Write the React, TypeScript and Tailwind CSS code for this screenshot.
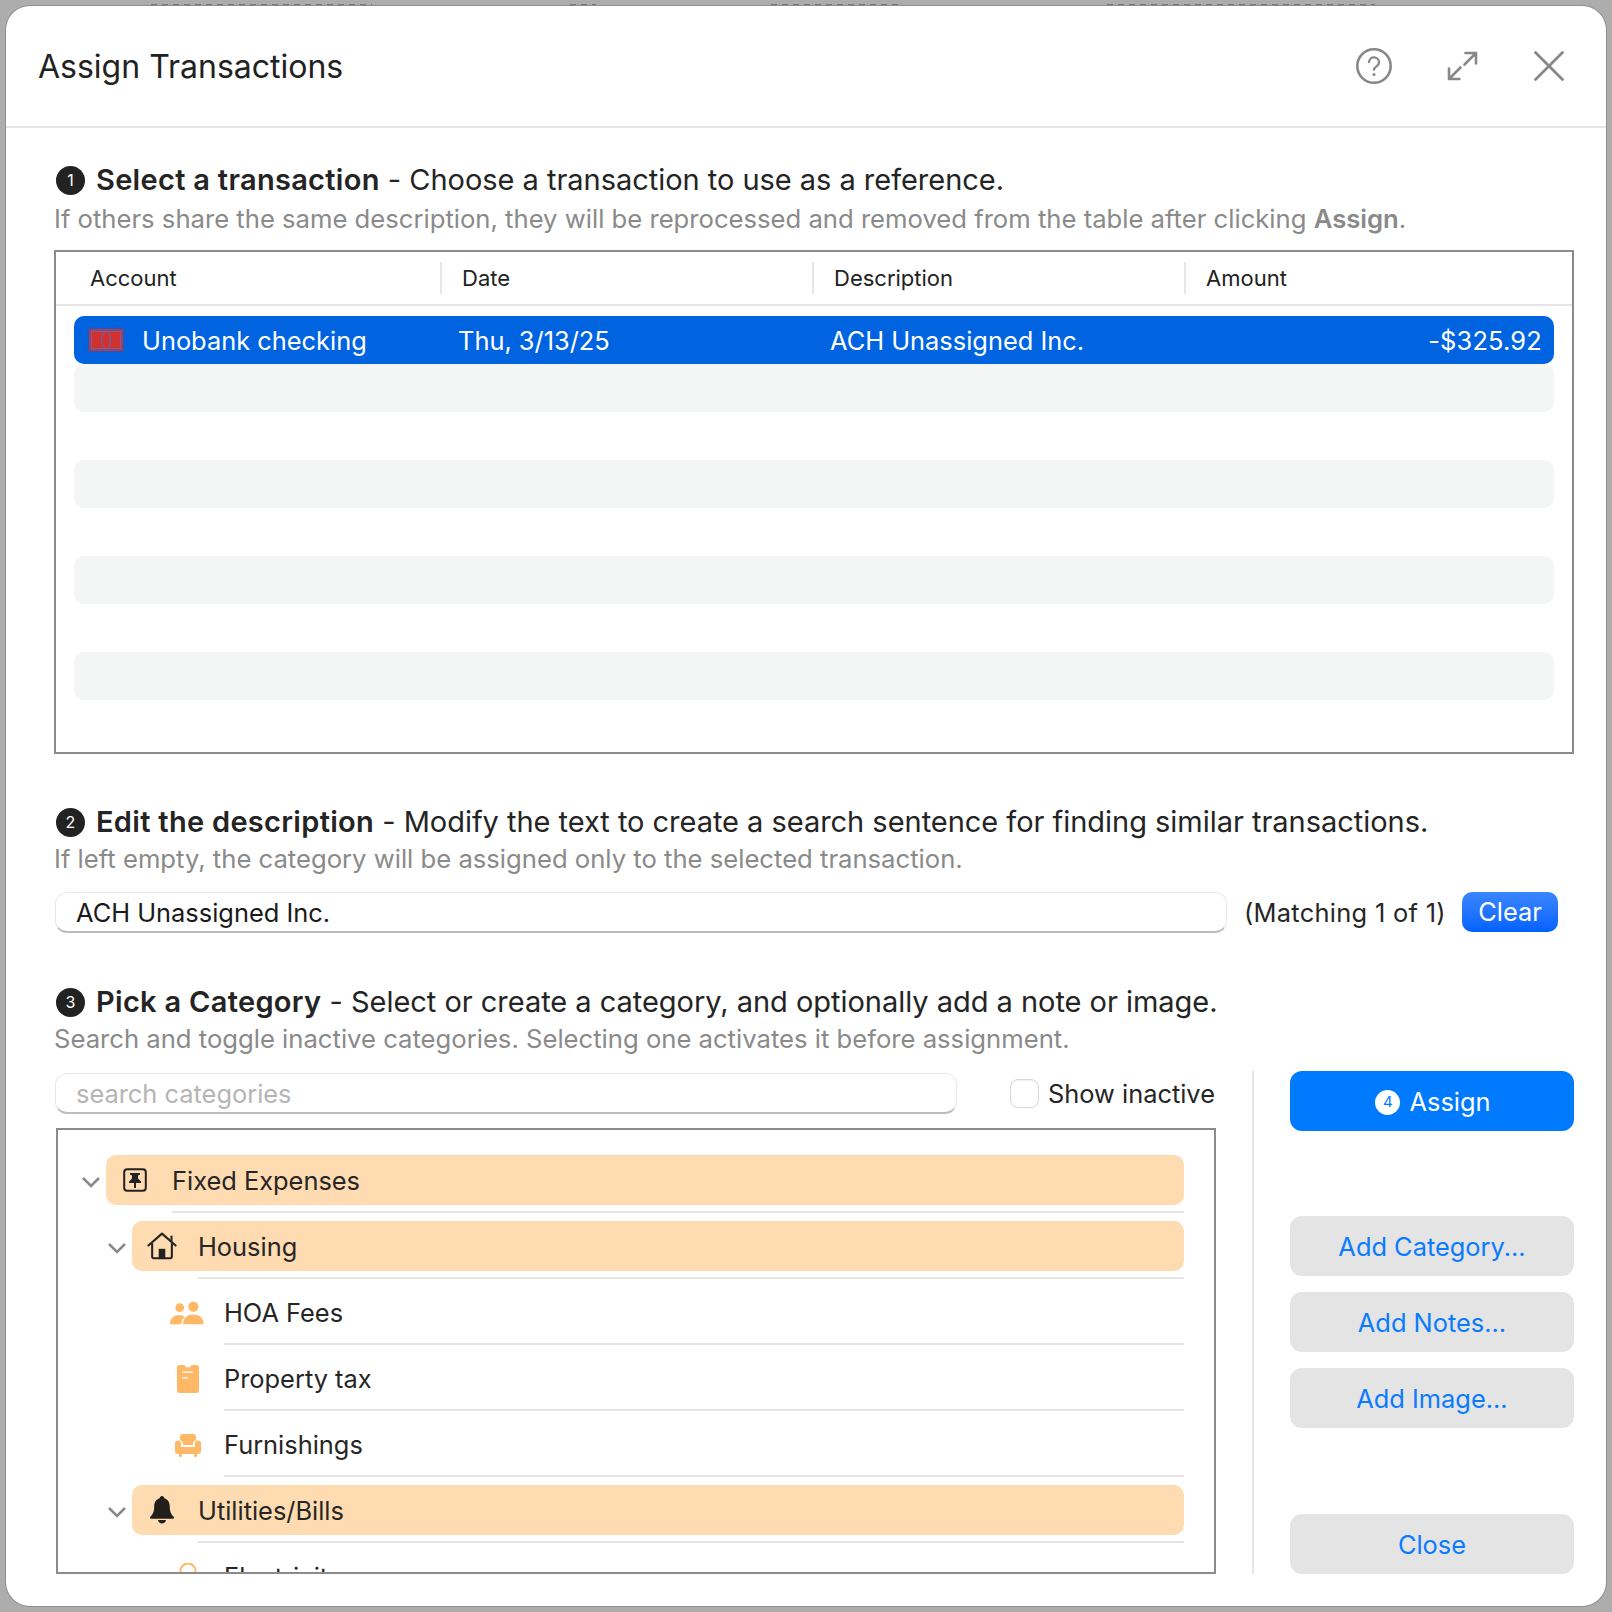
const sans = "font-['Inter','Noto_Sans',sans-serif]";

function Badge({ n }: { n: number }) {
  return (
    <span className="ml-[2px] mr-[11px] inline-flex h-[29px] w-[29px] shrink-0 items-center justify-center rounded-full bg-[#222222] text-[16px] font-normal tracking-normal text-white">
      {n}
    </span>
  );
}

function Heading({ n, bold, rest, className }: { n: number; bold: string; rest: string; className?: string }) {
  return (
    <div className={"flex items-center text-[29px] leading-[36px] text-[#242424] " + (className ?? "")}>
      <Badge n={n} />
      <span className="whitespace-pre tracking-[-0.03px]">
        <span className="font-semibold tracking-[0.3px]">{bold}</span>
        {rest}
      </span>
    </div>
  );
}

function Chevron() {
  return (
    <svg width="20" height="12" viewBox="0 0 20 12" fill="none" className="mt-[4px] shrink-0">
      <path d="M2 2 10 10 18 2" stroke="#8a8a8a" strokeWidth="2.600" />
    </svg>
  );
}

function PinIcon() {
  return (
    <svg width="26" height="26" viewBox="0 0 26 26" fill="none">
      <rect x="2.200" y="2.200" width="21.600" height="21.600" rx="3" stroke="#222" strokeWidth="2" />
      <path d="M8 6h10v1.600l-2 1v3l3 2.900v1.500H7v-1.500l3-2.900v-3l-2-1z" fill="#222" />
      <rect x="12" y="15" width="2" height="6" fill="#222" />
    </svg>
  );
}

function HouseIcon() {
  return (
    <svg width="32" height="30" viewBox="0 0 32 30" fill="none">
      <path d="M1.500 14.500 16 1.800l14.500 12.700" stroke="#222" strokeWidth="2.200" strokeLinecap="round" strokeLinejoin="round" />
      <path d="M5.500 12v14.500a1.500 1.500 0 0 0 1.500 1.500h18a1.500 1.500 0 0 0 1.500-1.500V12" stroke="#222" strokeWidth="2.200" />
      <rect x="12.500" y="18" width="7" height="10" fill="#222" />
      <rect x="25" y="4" width="2.200" height="6" fill="#222" />
    </svg>
  );
}

function PeopleIcon() {
  return (
    <svg width="36" height="24" viewBox="0 0 36 24" fill="#ffb866">
      <circle cx="10" cy="6.500" r="4.500" />
      <circle cx="24" cy="5.500" r="5.300" />
      <path d="M1 23.500c-.6 0-1-.4-1-1 0-4.500 4-8.500 9-8.500 2.500 0 4.500.7 6 2-2 1.800-3.200 4-3.400 7.500z" />
      <path d="M14.500 23.500c-.6 0-1-.4-1-1C13.500 17 18 13.500 24 13.500s10.500 3.500 10.500 9c0 .6-.4 1-1 1z" />
    </svg>
  );
}

function NoteIcon() {
  return (
    <svg width="22" height="28" viewBox="0 0 22 28" fill="#ffb866">
      <path d="M2.500 0H7.500c.3 1.500 1.700 2.500 3.500 2.500s3.200-1 3.500-2.500h5A2.500 2.500 0 0 1 22 2.500V25.500A2.500 2.500 0 0 1 19.500 28h-17A2.500 2.500 0 0 1 0 25.500V2.500A2.500 2.500 0 0 1 2.500 0z" />
      <rect x="5.500" y="6.500" width="10.500" height="1.500" fill="#fff" opacity="0.9" />
      <rect x="5.500" y="12" width="5.500" height="1.500" fill="#fff" opacity="0.9" />
    </svg>
  );
}

function SofaIcon() {
  return (
    <svg width="26" height="23" viewBox="0 0 26 23" fill="#ffb866">
      <path d="M5 3a3 3 0 0 1 3-3h10a3 3 0 0 1 3 3v3.500a3.500 3.500 0 0 0-3 3.500v1H8v-1a3.500 3.500 0 0 0-3-3.500z" />
      <path d="M0 9.500A2.500 2.500 0 0 1 6 9.500V13h14V9.500a2.500 2.500 0 0 1 6 0V17a3 3 0 0 1-3 3H3a3 3 0 0 1-3-3z" />
      <rect x="4" y="20" width="3" height="3" rx="1" />
      <rect x="19" y="20" width="3" height="3" rx="1" />
    </svg>
  );
}

function BellIcon() {
  return (
    <svg width="26" height="28" viewBox="0 0 26 28" fill="#221f1a">
      <path d="M13 0c1.400 0 2.200 1 2.300 2.200C19 3.300 20.800 6.500 20.800 10.500c0 5 1.200 7.500 3.800 10.200.7.700.4 2-.8 2H2.200c-1.200 0-1.500-1.300-.8-2C4 18 5.200 15.500 5.200 10.500 5.200 6.500 7 3.300 10.700 2.200 10.800 1 11.600 0 13 0z" />
      <path d="M9 24h8c-.3 2-2 3.500-4 3.500S9.300 26 9 24z" />
    </svg>
  );
}

function Pill({ label, icon, indent }: { label: string; icon: React.ReactNode; indent: "a" | "b" }) {
  return (
    <div className={"flex h-[66px] flex-col " + (indent === "a" ? "pl-[22px]" : "pl-[48px]")}>
      <div className="flex h-[50px] items-center">
        <span className="flex w-[26px] shrink-0 justify-start pl-[1px]"><Chevron /></span>
        <div className="flex h-[50px] flex-1 items-center rounded-[10px] bg-[#fedbb0]">
          <span className={"flex shrink-0 items-center justify-center " + (indent === "a" ? "ml-[16px] w-[26px]" : "ml-[15px] w-[30px]")}>{icon}</span>
          <span className={"mt-[2px] " + (indent === "a" ? "ml-[24px]" : "ml-[21px]")}>{label}</span>
        </div>
      </div>
      <div className="ml-[92px] mt-[6px] h-[2px] bg-[#e5e5e5]" />
    </div>
  );
}

function Leaf({ label, icon }: { label: string; icon: React.ReactNode }) {
  return (
    <div className="flex h-[66px] flex-col pl-[111px]">
      <div className="flex h-[52px] shrink-0 items-center">
        <span className="flex w-[36px] shrink-0 items-center justify-center pl-[1px]">{icon}</span>
        <span className="ml-[19px]">{label}</span>
      </div>
      <div className="ml-[55px] mt-[4px] h-[2px] shrink-0 bg-[#e5e5e5]" />
    </div>
  );
}

function SideButton({ label, className }: { label: string; className?: string }) {
  return (
    <button className={"flex h-[60px] w-full shrink-0 items-center justify-center rounded-[12px] bg-[#e4e4e4] pt-[2px] text-[#0a7bff] " + (className ?? "")}>
      {label}
    </button>
  );
}

const rows = [0, 1, 2, 3, 4, 5, 6, 7];

const fragment = "absolute top-[4px] h-[2px] bg-[repeating-linear-gradient(90deg,#757575_0_6px,transparent_6px_11px)]";

export default function App() {
  return (
    <div className={"relative flex h-[1612px] w-[1612px] flex-col overflow-hidden bg-[#adadad] p-[6px] text-[25.4px] text-[#262626] " + sans}>
      <div className={fragment + " left-[151px] w-[221px]"} />
      <div className={fragment + " left-[570px] w-[26px]"} />
      <div className={fragment + " left-[771px] w-[131px]"} />
      <div className={fragment + " left-[1107px] w-[268px]"} />
      <div className="relative flex h-full flex-col rounded-[24px] bg-white shadow-[0_0_0_1px_#8e8e8e]">
        <header className="flex h-[122px] shrink-0 items-center justify-between border-b-2 border-[#e5e5e5] pl-[32px] pr-[42px]">
          <h1 className="mt-[1px] text-[32px] font-normal text-[#222222]">Assign Transactions</h1>
          <div className="flex items-center text-[#888888]">
            <svg width="38" height="38" viewBox="0 0 38 38" fill="none" stroke="currentColor" strokeWidth="2.600" strokeLinecap="round">
              <circle cx="19" cy="19" r="16.700" />
              <path d="M14 15a5 5 0 0 1 10 .8c0 3.400-5 3.800-5 7" strokeWidth="2.300" />
              <circle cx="19" cy="27.500" r="1.500" fill="currentColor" stroke="none" />
            </svg>
            <svg className="ml-[53px]" width="32" height="32" viewBox="0 0 32 32" fill="none" stroke="currentColor" strokeWidth="2.600" strokeLinecap="round" strokeLinejoin="round">
              <path d="M19.500 3H30V13.500M30 3 18.500 14.500M3 18.500V29H13.500M3 29 14.500 17.500" />
            </svg>
            <svg className="ml-[56px]" width="30" height="30" viewBox="0 0 30 30" fill="none" stroke="currentColor" strokeWidth="2.800" strokeLinecap="round">
              <path d="M1.500 1.500 28.500 28.500M28.500 1.500 1.500 28.500" />
            </svg>
          </div>
        </header>
        <main className="flex min-h-0 flex-1 flex-col pl-[48px] pr-[32px]">
          <Heading n={1} bold="Select a transaction" rest=" - Choose a transaction to use as a reference." className="mt-[34px]" />
          <p className="mt-[3px] text-[25.65px] leading-[36px] text-[#8a8a8a]">
            If others share the same description, they will be reprocessed and removed from the table after clicking <b className="font-semibold">Assign</b>.
          </p>
          <section className="mt-[13px] h-[504px] shrink-0 border-2 border-[#8a8a8f] bg-white">
            <div className="flex h-[54px] items-center border-b-2 border-[#e5e5e5] text-[22px] text-[#222222]">
              {["Account", "Date", "Description", "Amount"].map((h) => (
                <div key={h} className="flex h-[32px] w-[372px] items-center border-l-2 border-[#e5e5e5] pl-[20px] first:w-[384px] first:border-l-0 first:pl-[34px] last:flex-1">
                  {h}
                </div>
              ))}
            </div>
            <div className="flex flex-col pl-[18px] pr-[18px] pt-[10px]">
              {rows.map((i) =>
                i === 0 ? (
                  <div key={i} className="flex h-[48px] items-center rounded-[10px] bg-[#0064e1] text-white">
                    <span className="ml-[15px] flex h-[22px] w-[34px] shrink-0 items-center justify-center border-2 border-[#d0312d] bg-[#d0312d] outline outline-1 -outline-offset-3 outline-[#4f6bd0]">
                      <span className="h-[18px] w-[10px] rounded-[50%] border-[1.500px] border-[#4f6bd0]" />
                    </span>
                    <span className="ml-[19px] mt-[2px] w-[316px] shrink-0">Unobank checking</span>
                    <span className="mt-[2px] w-[372px] shrink-0">Thu, 3/13/25</span>
                    <span className="mt-[2px] flex-1">ACH Unassigned Inc.</span>
                    <span className="mr-[12px] mt-[2px] tracking-[0.2px]">-$325.92</span>
                  </div>
                ) : (
                  <div key={i} className={"h-[48px] rounded-[10px] " + (i % 2 === 1 ? "bg-[#f4f5f5]" : "")} />
                ),
              )}
            </div>
          </section>
          <Heading n={2} bold="Edit the description" rest=" - Modify the text to create a search sentence for finding similar transactions." className="mt-[50px]" />
          <p className="text-[25.65px] leading-[38px] text-[#8a8a8a]">If left empty, the category will be assigned only to the selected transaction.</p>
          <div className="mt-[14px] flex items-center">
            <div className="ml-[1px] flex h-[41px] w-[1172px] shrink-0 items-center rounded-[12px] border border-b-2 border-[#e8e8e8] border-b-[#bdbdbd] bg-white pl-[20px] pt-[2px] text-[#1a1a1a]">ACH Unassigned Inc.</div>
            <span className="ml-[17px] mt-[2px] tracking-[0.3px]">(Matching 1 of 1)</span>
            <button className="mb-[1px] ml-auto mr-[16px] flex h-[40px] w-[96px] shrink-0 items-center justify-center rounded-[10px] bg-gradient-to-b from-[#3a86ff] to-[#0062ff] text-white">Clear</button>
          </div>
          <Heading n={3} bold="Pick a Category" rest=" - Select or create a category, and optionally add a note or image." className="mt-[51px]" />
          <p className="text-[25.65px] leading-[38px] text-[#8a8a8a]">Search and toggle inactive categories. Selecting one activates it before assignment.</p>
          <div className="mt-[13px] flex min-h-0 flex-1 pb-[32px]">
            <div className="flex w-[1162px] shrink-0 flex-col pt-[2px]">
              <div className="flex h-[41px] shrink-0 items-center">
                <div className="ml-[1px] flex h-[41px] w-[902px] shrink-0 items-center rounded-[12px] border border-b-2 border-[#e8e8e8] border-b-[#bdbdbd] pl-[20px] pt-[2px] text-[#b5b5b5]">search categories</div>
                <span className="ml-[53px] h-[29px] w-[29px] shrink-0 rounded-[8px] border border-[#d8d8d8] bg-white shadow-[inset_0_1px_2px_rgba(0,0,0,0.06)]" />
                <span className="ml-[9px] mt-[2px] whitespace-nowrap">Show inactive</span>
              </div>
              <div className="ml-[2px] mt-[14px] min-h-0 flex-1 overflow-hidden border-2 border-[#8a8a8f] pr-[30px] pt-[25px]">
                <Pill indent="a" label="Fixed Expenses" icon={<PinIcon />} />
                <Pill indent="b" label="Housing" icon={<HouseIcon />} />
                <Leaf label="HOA Fees" icon={<PeopleIcon />} />
                <Leaf label="Property tax" icon={<NoteIcon />} />
                <Leaf label="Furnishings" icon={<SofaIcon />} />
                <Pill indent="b" label="Utilities/Bills" icon={<BellIcon />} />
                <Leaf
                  label="Electricity"
                  icon={
                    <svg width="28" height="28" viewBox="0 0 28 28" fill="none">
                      <circle cx="14" cy="8" r="7.500" stroke="#ffb866" strokeWidth="2" />
                    </svg>
                  }
                />
              </div>
            </div>
            <div className="ml-[36px] w-[2px] shrink-0 bg-[#e5e5e5]" />
            <div className="ml-[36px] flex flex-1 flex-col">
              <button className="flex h-[60px] shrink-0 items-center justify-center rounded-[12px] bg-[#007aff] pl-[2px] pt-[2px] text-white">
                <span className="mr-[9px] flex h-[25px] w-[25px] items-center justify-center rounded-full bg-white text-[15px] text-[#007aff]">4</span>
                Assign
              </button>
              <SideButton label="Add Category..." className="mt-[85px]" />
              <SideButton label="Add Notes..." className="mt-[16px]" />
              <SideButton label="Add Image..." className="mt-[16px]" />
              <SideButton label="Close" className="mt-auto" />
            </div>
          </div>
        </main>
      </div>
    </div>
  );
}
